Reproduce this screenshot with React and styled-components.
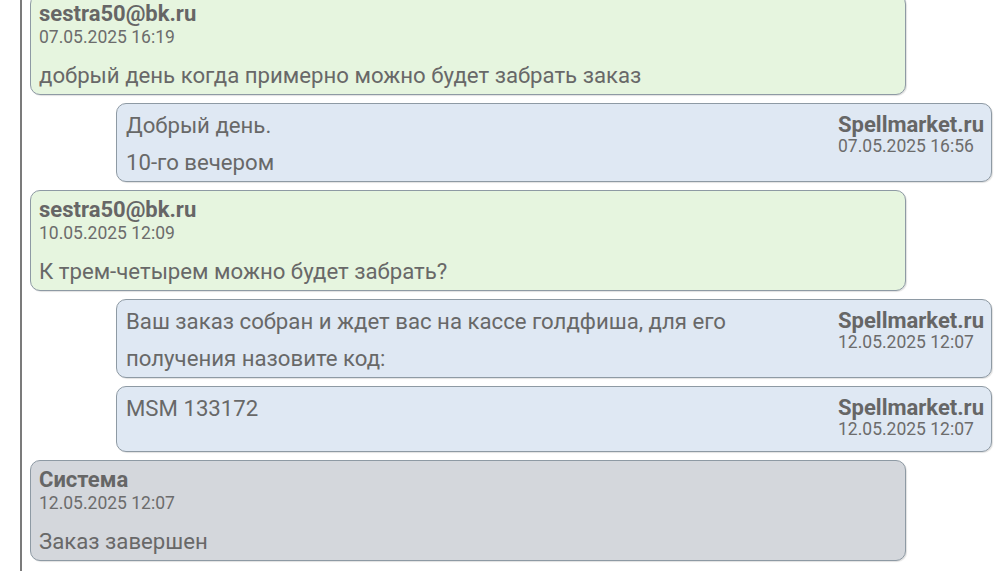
import React from "react";
import styled, { createGlobalStyle } from "styled-components";

const Global = createGlobalStyle`
  html, body { margin: 0; padding: 0; background: #ffffff; }
  body { font-family: Roboto, "Noto Sans", sans-serif; color: #636363; overflow: hidden; }
`;

const Page = styled.div`
  width: 996px;
  height: 571px;
  overflow: hidden;
  background: #fff;
`;

const Thread = styled.div`
  margin-left: 20px;
  border-left: 2px solid #7b7b7b;
  padding: 0 4px 20px 8px;
  min-height: 600px;
  display: flex;
  flex-direction: column;
  gap: 8px;
  margin-top: -6px;
`;

const tones = {
  client: "#e6f5df",
  shop: "#dfe8f3",
  system: "#d4d7dc",
};

const Bubble = styled.div`
  box-sizing: border-box;
  background: ${(p) => tones[p.$tone]};
  border: 1px solid #8e9aa4;
  border-radius: 10px;
  box-shadow: 1px 1px 1px rgba(0, 0, 0, 0.12);
  width: 876px;
  align-self: ${(p) => (p.$tone === "shop" ? "flex-end" : "flex-start")};
`;

const LeftBody = styled.div`
  padding: 6px 8px 0 8px;
`;

const Author = styled.div`
  font-weight: 700;
  font-size: 22px;
  line-height: 26px;
  color: #666;
`;

const Stamp = styled.div`
  font-size: 17.5px;
  line-height: 20px;
  color: #6c6c6c;
`;

const Message = styled.div`
  font-size: 22.2px;
  line-height: 37px;
  color: #686868;
  margin-top: ${(p) => p.$gap || 0}px;
`;

const RightBody = styled.div`
  display: flex;
  justify-content: space-between;
  padding: 3px 7px 0 9px;
`;

const Texts = styled.div`
  flex: 1;
  min-width: 0;
`;

const Meta = styled.div`
  flex: none;
  margin-left: 24px;
  text-align: left;
  padding: 7px 0 12px;
  ${Author} { line-height: 22px; }
`;

function ClientMsg({ tone = "client", author, date, children }) {
  return (
    <Bubble $tone={tone}>
      <LeftBody>
        <Author>{author}</Author>
        <Stamp>{date}</Stamp>
        <Message $gap={10}>{children}</Message>
      </LeftBody>
    </Bubble>
  );
}

function ShopMsg({ date, lines }) {
  return (
    <Bubble $tone="shop">
      <RightBody>
        <Texts>
          {lines.map((l, i) => (
            <Message key={i}>{l}</Message>
          ))}
        </Texts>
        <Meta>
          <Author>Spellmarket.ru</Author>
          <Stamp>{date}</Stamp>
        </Meta>
      </RightBody>
    </Bubble>
  );
}

export default function App() {
  return (
    <Page>
      <Global />
      <Thread>
        <ClientMsg author="sestra50@bk.ru" date="07.05.2025 16:19">
          добрый день когда примерно можно будет забрать заказ
        </ClientMsg>
        <ShopMsg date="07.05.2025 16:56" lines={["Добрый день.", "10-го вечером"]} />
        <ClientMsg author="sestra50@bk.ru" date="10.05.2025 12:09">
          К трем-четырем можно будет забрать?
        </ClientMsg>
        <ShopMsg
          date="12.05.2025 12:07"
          lines={["Ваш заказ собран и ждет вас на кассе голдфиша, для его получения назовите код:"]}
        />
        <ShopMsg date="12.05.2025 12:07" lines={["MSM 133172"]} />
        <ClientMsg tone="system" author="Система" date="12.05.2025 12:07">
          Заказ завершен
        </ClientMsg>
      </Thread>
    </Page>
  );
}
